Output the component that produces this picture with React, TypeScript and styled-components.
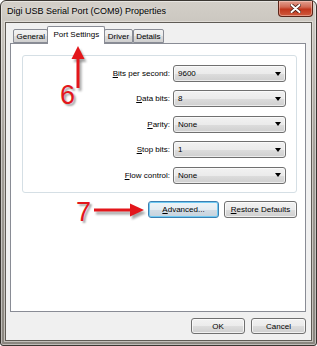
import React from "react";
import styled, { createGlobalStyle } from "styled-components";

const GlobalStyle = createGlobalStyle`
  html, body { margin: 0; padding: 0; background: #ffffff; overflow: hidden; }
  * { box-sizing: border-box; }
`;

const Window = styled.div`
  position: relative;
  width: 317px;
  height: 346px;
  border: 1px solid #3a3631;
  border-radius: 6px 6px 3px 3px;
  padding: 0 4px 4px 4px;
  display: flex;
  flex-direction: column;
  background: linear-gradient(180deg, #d3cfc8 0px, #cbc7c0 22px, #a39f98 45%, #8a867f 100%);
  box-shadow: inset 0 0 0 1px rgba(255, 255, 255, 0.45);
  font-family: "Liberation Sans", Arial, sans-serif;
  color: #000;
`;

const TitleBar = styled.div`
  height: 21px;
  display: flex;
  align-items: flex-start;
  justify-content: space-between;
  padding-left: 2px;
`;

const TitleText = styled.div`
  font-size: 9px;
  line-height: 21px;
  color: #000;
  text-shadow: 0 0 6px rgba(255, 255, 255, 0.9);
`;

const CloseButton = styled.div`
  width: 35px;
  height: 16px;
  margin-right: -1px;
  border: 1px solid #5b2519;
  border-top: none;
  border-radius: 0 0 4px 4px;
  background: linear-gradient(180deg, #e3a08f 0%, #d26a55 40%, #c2371d 55%, #cf5b3f 100%);
  box-shadow: inset 0 0 0 1px rgba(255, 220, 210, 0.45);
  display: flex;
  align-items: center;
  justify-content: center;
`;

const Client = styled.div`
  flex: 1;
  display: flex;
  flex-direction: column;
  background: #f0f0f0;
  border: 1px solid #5f5b55;
  box-shadow: 0 0 0 1px rgba(235, 232, 226, 0.6);
  padding: 3px 5px 6px 4px;
  font-size: 8px;
`;

const TabRow = styled.div`
  height: 17px;
  display: flex;
  align-items: flex-end;
  padding-left: 3px;
  position: relative;
  z-index: 1;
`;

const Tab = styled.div<{ $active?: boolean }>`
  height: ${(p) => (p.$active ? "18px" : "14px")};
  margin: ${(p) => (p.$active ? "0 -1px -1px -1px" : "0")};
  padding: ${(p) => (p.$active ? "0 5px" : "0 2.5px")};
  border: 1px solid #898c95;
  border-bottom: ${(p) => (p.$active ? "none" : "1px solid #898c95")};
  border-radius: 2px 2px 0 0;
  background: ${(p) =>
    p.$active
      ? "#ffffff"
      : "linear-gradient(180deg, #f3f3f3 0%, #ebebeb 50%, #dddddd 51%, #cfcfcf 100%)"};
  position: relative;
  z-index: ${(p) => (p.$active ? 2 : 1)};
  display: flex;
  align-items: ${(p) => (p.$active ? "flex-start" : "center")};
  padding-top: ${(p) => (p.$active ? "3px" : "0")};
  white-space: nowrap;
  font-size: 8px;
`;

const Panel = styled.div`
  flex: 1;
  background: #ffffff;
  border: 1px solid #898c95;
  padding: 11px 8px 0 11px;
  display: flex;
  flex-direction: column;
`;

const GroupBox = styled.div`
  border: 1px solid #d5dfe5;
  border-radius: 3px;
  padding: 9px 10px 8px 0;
  display: grid;
  grid-template-columns: 1fr 113px;
  grid-auto-rows: 17px;
  column-gap: 3px;
  row-gap: 8.4px;
`;

const Label = styled.div`
  text-align: right;
  align-self: center;
  white-space: nowrap;
  font-size: 8px;
`;

const Combo = styled.div`
  height: 17px;
  border: 1px solid #707070;
  border-radius: 3px;
  background: linear-gradient(180deg, #f2f2f2 0%, #ebebeb 50%, #dddddd 51%, #cfcfcf 100%);
  box-shadow: inset 0 0 0 1px rgba(255, 255, 255, 0.6);
  display: flex;
  align-items: center;
  justify-content: space-between;
  padding: 0 4px 0 4px;
  font-size: 8px;
`;

const DropArrow = styled.span`
  width: 0;
  height: 0;
  border-left: 3.5px solid transparent;
  border-right: 3.5px solid transparent;
  border-top: 4px solid #000;
  margin-right: 0px;
`;

const ButtonRow = styled.div<{ $gap: number }>`
  display: flex;
  justify-content: flex-end;
  gap: ${(p) => p.$gap}px;
`;

const PanelButtons = styled(ButtonRow)`
  margin-top: 8px;
`;

const Footer = styled(ButtonRow)`
  margin-top: 6px;
`;

const Button = styled.div<{ $width: number; $default?: boolean; $height?: number }>`
  width: ${(p) => p.$width}px;
  height: ${(p) => p.$height ?? 17}px;
  border: 1px solid ${(p) => (p.$default ? "#3c7fb1" : "#707070")};
  border-radius: 3px;
  background: ${(p) =>
    p.$default
      ? "linear-gradient(180deg, #eef4f8 0%, #e4ecf2 50%, #d3dde6 51%, #c6d2dc 100%)"
      : "linear-gradient(180deg, #f2f2f2 0%, #ebebeb 50%, #dddddd 51%, #cfcfcf 100%)"};
  box-shadow: ${(p) =>
    p.$default ? "inset 0 0 0 1px #6fcaf3" : "inset 0 0 0 1px rgba(255, 255, 255, 0.7)"};
  display: flex;
  align-items: center;
  justify-content: center;
  font-size: 8px;
  white-space: nowrap;
`;

const Annotation = styled.div<{ $left: number; $top: number }>`
  position: absolute;
  left: ${(p) => p.$left}px;
  top: ${(p) => p.$top}px;
  font-family: "Liberation Sans", Arial, sans-serif;
  font-size: 27px;
  line-height: 1;
  color: #e3161b;
  text-shadow: 2px 2px 2px rgba(0, 0, 0, 0.35);
  pointer-events: none;
`;

const ArrowSvg = styled.svg<{ $left: number; $top: number }>`
  position: absolute;
  left: ${(p) => p.$left}px;
  top: ${(p) => p.$top}px;
  overflow: visible;
  pointer-events: none;
`;

const rows: { label: string; key: string; value: string }[] = [
  { label: "its per second:", key: "B", value: "9600" },
  { label: "ata bits:", key: "D", value: "8" },
  { label: "arity:", key: "P", value: "None" },
  { label: "top bits:", key: "S", value: "1" },
  { label: "low control:", key: "F", value: "None" },
];

export default function App() {
  return (
    <>
      <GlobalStyle />
      <Window>
        <TitleBar>
          <TitleText>Digi USB Serial Port (COM9) Properties</TitleText>
          <CloseButton>
            <svg width="11" height="9" viewBox="0 0 11 9">
              <path d="M1.5 1 L9.5 8 M9.5 1 L1.5 8" stroke="#4a1d14" strokeWidth="3.6" strokeLinecap="round" />
              <path d="M1.5 1 L9.5 8 M9.5 1 L1.5 8" stroke="#ffffff" strokeWidth="2" strokeLinecap="round" />
            </svg>
          </CloseButton>
        </TitleBar>
        <Client>
          <TabRow>
            <Tab>General</Tab>
            <Tab $active>Port Settings</Tab>
            <Tab>Driver</Tab>
            <Tab>Details</Tab>
          </TabRow>
          <Panel>
            <GroupBox>
              {rows.map((r) => (
                <React.Fragment key={r.key}>
                  <Label>
                    <u>{r.key}</u>
                    {r.label}
                  </Label>
                  <Combo>
                    <span>{r.value}</span>
                    <DropArrow />
                  </Combo>
                </React.Fragment>
              ))}
            </GroupBox>
            <PanelButtons $gap={5}>
              <Button $width={71} $default>
                <span>
                  <u>A</u>dvanced...
                </span>
              </Button>
              <Button $width={73}>
                <span>
                  <u>R</u>estore Defaults
                </span>
              </Button>
            </PanelButtons>
          </Panel>
          <Footer $gap={6}>
            <Button $width={54} $height={16}>OK</Button>
            <Button $width={55} $height={16}>Cancel</Button>
          </Footer>
        </Client>

        <ArrowSvg $left={64} $top={40} width="30" height="52" viewBox="0 0 30 52">
          <defs>
            <filter id="sh6" x="-50%" y="-50%" width="200%" height="200%">
              <feGaussianBlur stdDeviation="1.2" />
            </filter>
          </defs>
          <g transform="translate(2 3)" fill="rgba(0,0,0,0.35)" filter="url(#sh6)">
            <polygon points="13,5 6.5,18 19.5,18" />
            <rect x="11.5" y="17" width="3" height="30" />
          </g>
          <g fill="#e3161b">
            <polygon points="13,5 6.5,18 19.5,18" />
            <rect x="11.5" y="17" width="3" height="30" />
          </g>
        </ArrowSvg>
        <Annotation $left={59} $top={81}>6</Annotation>

        <ArrowSvg $left={90} $top={198} width="56" height="22" viewBox="0 0 56 22">
          <defs>
            <filter id="sh7" x="-50%" y="-50%" width="200%" height="200%">
              <feGaussianBlur stdDeviation="1.2" />
            </filter>
          </defs>
          <g transform="translate(2 3)" fill="rgba(0,0,0,0.35)" filter="url(#sh7)">
            <polygon points="53,11 39,4.5 39,17.5" />
            <rect x="3" y="9.5" width="37" height="3" />
          </g>
          <g fill="#e3161b">
            <polygon points="53,11 39,4.5 39,17.5" />
            <rect x="3" y="9.5" width="37" height="3" />
          </g>
        </ArrowSvg>
        <Annotation $left={75} $top={198}>7</Annotation>
      </Window>
    </>
  );
}
